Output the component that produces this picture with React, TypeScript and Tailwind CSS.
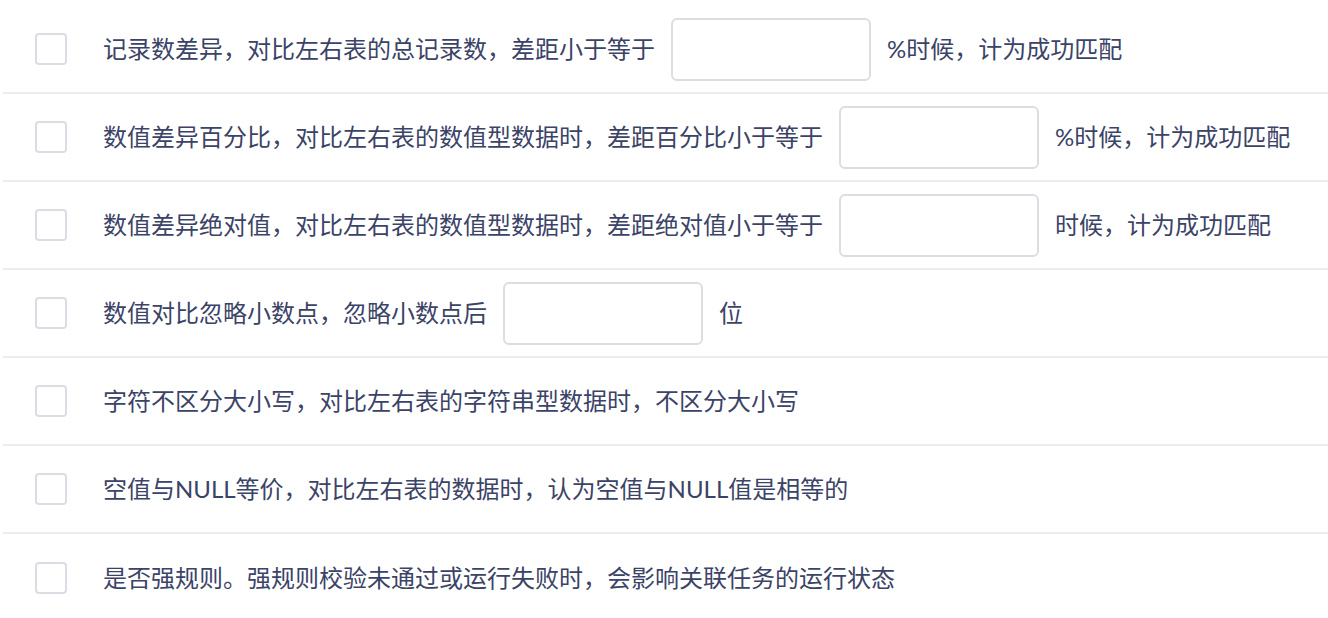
import React from "react";

type Rule = {
  before: string;
  after?: string;
  hasInput?: boolean;
};

const rules: Rule[] = [
  { before: "记录数差异，对比左右表的总记录数，差距小于等于", after: "%时候，计为成功匹配", hasInput: true },
  { before: "数值差异百分比，对比左右表的数值型数据时，差距百分比小于等于", after: "%时候，计为成功匹配", hasInput: true },
  { before: "数值差异绝对值，对比左右表的数值型数据时，差距绝对值小于等于", after: "时候，计为成功匹配", hasInput: true },
  { before: "数值对比忽略小数点，忽略小数点后", after: "位", hasInput: true },
  { before: "字符不区分大小写，对比左右表的字符串型数据时，不区分大小写" },
  { before: "空值与NULL等价，对比左右表的数据时，认为空值与NULL值是相等的" },
  { before: "是否强规则。强规则校验未通过或运行失败时，会影响关联任务的运行状态" },
];

function RuleRow({ rule, last }: { rule: Rule; last: boolean }) {
  return (
    <div
      className={`flex items-center h-[88px] pl-8 ${last ? "" : "border-b-2 border-[#ebebf1]"}`}
    >
      {/* Checkbox */}
      <div className="w-8 h-8 shrink-0 rounded-[4px] border-2 border-[#dadde3] bg-white" />
      <span className="ml-9 whitespace-nowrap">{rule.before}</span>
      {rule.hasInput && (
        <>
          <input
            type="text"
            className="ml-4 w-[200px] h-[63px] shrink-0 rounded-[6px] border-2 border-[#dcdde3] bg-white outline-none"
          />
          <span className="ml-4 whitespace-nowrap">{rule.after}</span>
        </>
      )}
    </div>
  );
}

export default function App() {
  return (
    <div
      className="w-[1328px] h-[618px] bg-white pt-[6px] pl-[3px] text-[24px] text-[#3b4367] overflow-hidden"
      style={{ fontFamily: 'Lato, "Noto Sans CJK SC", sans-serif' }}
    >
      {rules.map((rule, i) => (
        <RuleRow key={i} rule={rule} last={i === rules.length - 1} />
      ))}
    </div>
  );
}
